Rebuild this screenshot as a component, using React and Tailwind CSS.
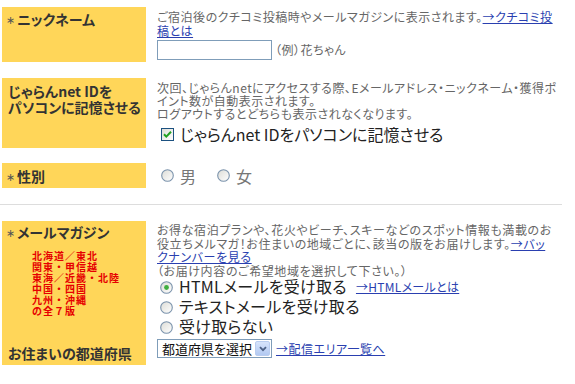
import React from "react";

const FONT = { fontFamily: '"Noto Sans CJK JP", "Noto Sans", sans-serif' };

function Radio({ checked }) {
  return (
    <svg width="13" height="13" viewBox="0 0 13 13" className="shrink-0">
      <defs>
        <linearGradient id={checked ? "rg1" : "rg0"} x1="0" y1="0" x2="1" y2="1">
          <stop offset="0" stopColor="#dcdcd6" />
          <stop offset="1" stopColor="#ffffff" />
        </linearGradient>
      </defs>
      <circle cx="6.5" cy="6.5" r="5.8" fill={`url(#${checked ? "rg1" : "rg0"})`} stroke="#7b93ac" strokeWidth="1.1" />
      {checked && <circle cx="6.5" cy="6.5" r="2.4" fill="#3fae3f" />}
    </svg>
  );
}

function Checkbox() {
  return (
    <svg width="13" height="13" viewBox="0 0 13 13" className="shrink-0">
      <defs>
        <linearGradient id="cbg" x1="0" y1="0" x2="1" y2="1">
          <stop offset="0" stopColor="#dcdcd6" />
          <stop offset="1" stopColor="#ffffff" />
        </linearGradient>
      </defs>
      <rect x="0.5" y="0.5" width="12" height="12" fill="url(#cbg)" stroke="#1c5180" />
      <path d="M3 6.2 L5.3 8.6 L10 3.8" fill="none" stroke="#21a121" strokeWidth="2" />
    </svg>
  );
}

function Link({ children }) {
  return <span className="text-[#2a3fb0] underline underline-offset-[1px]">{children}</span>;
}

function Label({ children }) {
  return (
    <div className="w-[144px] shrink-0 bg-[#ffd659] text-[#333] font-bold">{children}</div>
  );
}

function Star() {
  return (
    <span
      className="inline-block w-[11px] text-[11px] leading-[11px] text-[#555] font-normal align-[1px]"
      style={{ fontFamily: '"DejaVu Sans", sans-serif' }}
    >
      ∗
    </span>
  );
}

export default function App() {
  return (
    <div
      className="w-[575px] h-[384px] bg-white overflow-hidden [font-feature-settings:'palt']"
      style={FONT}
    >
      <div className="pt-[7px] pl-[2px]">
        {/* Row 1 */}
        <div className="flex h-[55px]">
          <Label>
            <div className="pt-[4px] pl-[4px] text-[14px] leading-[16px] h-[20px]">
              <Star />ニックネーム
            </div>
          </Label>
          <div className="ml-[11px] pt-[3px] text-[12px] leading-[14px] tracking-[0.5px] text-[#666]">
            <div className="whitespace-nowrap">
              ご宿泊後のクチコミ投稿時やメールマガジンに表示されます。<Link>→クチコミ投</Link>
            </div>
            <div>
              <Link>稿とは</Link>
            </div>
            <div className="flex items-center mt-[2px]">
              <div className="w-[115px] h-[20px] border border-[#7f9db9] bg-white" />
              <span className="ml-[3px]">（例）花ちゃん</span>
            </div>
          </div>
        </div>

        {/* Row 2 */}
        <div className="flex h-[70px] mt-[16px]">
          <Label>
            <div className="pt-[5px] pl-[6px] text-[14px] leading-[16px]">
              じゃらんnet IDを
              <br />
              パソコンに記憶させる
            </div>
          </Label>
          <div className="ml-[11px] pt-[3px] text-[12px] leading-[13px] tracking-[0.5px] text-[#666]">
            <div className="whitespace-nowrap">
              次回、じゃらんnetにアクセスする際、Eメールアドレス・ニックネーム・獲得ポ
            </div>
            <div className="whitespace-nowrap">イント数が自動表示されます。</div>
            <div className="whitespace-nowrap">ログアウトするとどちらも表示されなくなります。</div>
            <div className="flex items-center h-[20px] mt-[4px] pl-[4px] text-[16px] tracking-normal text-[#222]">
              <Checkbox />
              <span className="ml-[6px] whitespace-nowrap">じゃらんnet IDをパソコンに記憶させる</span>
            </div>
          </div>
        </div>

        {/* Row 3 */}
        <div className="flex h-[25px] mt-[15px]">
          <Label>
            <div className="h-full flex items-center pl-[4px] text-[14px] leading-[16px]">
              <span>
                <Star />性別
              </span>
            </div>
          </Label>
          <div className="ml-[11px] flex items-center pl-[4px] text-[16px] text-[#777]">
            <Radio />
            <span className="ml-[6px]">男</span>
            <span className="ml-[21px]">
              <Radio />
            </span>
            <span className="ml-[6px]">女</span>
          </div>
        </div>

        <div className="h-px bg-[#dddddd] w-[562px] -ml-[2px] mt-[16px]" />

        {/* Row 4 */}
        <div className="flex h-[144px] mt-[16px]">
          <Label>
            <div className="h-full flex flex-col">
              <div className="pt-[3px] pl-[4px] text-[14px] leading-[16px] h-[19px]">
                <Star />メールマガジン
              </div>
              <div className="mt-[10px] pl-[30px] text-[10px] leading-[11px] text-[#e60000] tracking-[1px] [font-feature-settings:normal]">
                <div>北海道／東北</div>
                <div>関東・甲信越</div>
                <div>東海／近畿・北陸</div>
                <div>中国・四国</div>
                <div>九州・沖縄</div>
                <div>の全７版</div>
              </div>
              <div className="mt-auto pb-[4px] pl-[6px] text-[14px] leading-[16px]">
                お住まいの都道府県
              </div>
            </div>
          </Label>
          <div className="ml-[11px] pt-[2px] text-[12px] leading-[13.5px] tracking-[0.6px] text-[#666]">
            <div className="whitespace-nowrap">
              お得な宿泊プランや、花火やビーチ、スキーなどのスポット情報も満載のお
            </div>
            <div className="whitespace-nowrap">
              役立ちメルマガ！お住まいの地域ごとに、該当の版をお届けします。<Link>→バッ</Link>
            </div>
            <div>
              <Link>クナンバーを見る</Link>
            </div>
            <div className="whitespace-nowrap">（お届け内容のご希望地域を選択して下さい。）</div>
            <div className="pl-[3px] text-[16px] tracking-normal text-[#222]">
              <div className="flex items-center h-[20px]">
                <Radio checked />
                <span className="ml-[6px] tracking-[0.3px]">HTMLメールを受け取る</span>
                <span className="ml-[9px] text-[12px] tracking-[0.3px]">
                  <Link>→HTMLメールとは</Link>
                </span>
              </div>
              <div className="flex items-center h-[20px]">
                <Radio />
                <span className="ml-[6px] tracking-[0.3px]">テキストメールを受け取る</span>
              </div>
              <div className="flex items-center h-[20px]">
                <Radio />
                <span className="ml-[6px] tracking-[0.3px]">受け取らない</span>
              </div>
            </div>
            <div className="flex items-center mt-[2px] tracking-normal">
              <div className="w-[115px] h-[19px] border border-[#7f9db9] bg-white flex items-center">
                <span className="pl-[4px] text-[13px] text-[#111] flex-1 whitespace-nowrap">都道府県を選択</span>
                <div className="w-[15px] h-[15px] mr-[1px] rounded-[2px] bg-gradient-to-b from-[#d7e4fb] to-[#b2c9f2] border border-[#b9cdf0] flex items-center justify-center">
                  <svg width="8" height="6" viewBox="0 0 8 6">
                    <path d="M1 1.2 L4 4.2 L7 1.2" fill="none" stroke="#4d6185" strokeWidth="1.8" />
                  </svg>
                </div>
              </div>
              <span className="ml-[4px] tracking-[0.5px]">
                <Link>→配信エリア一覧へ</Link>
              </span>
            </div>
          </div>
        </div>
      </div>
    </div>
  );
}
